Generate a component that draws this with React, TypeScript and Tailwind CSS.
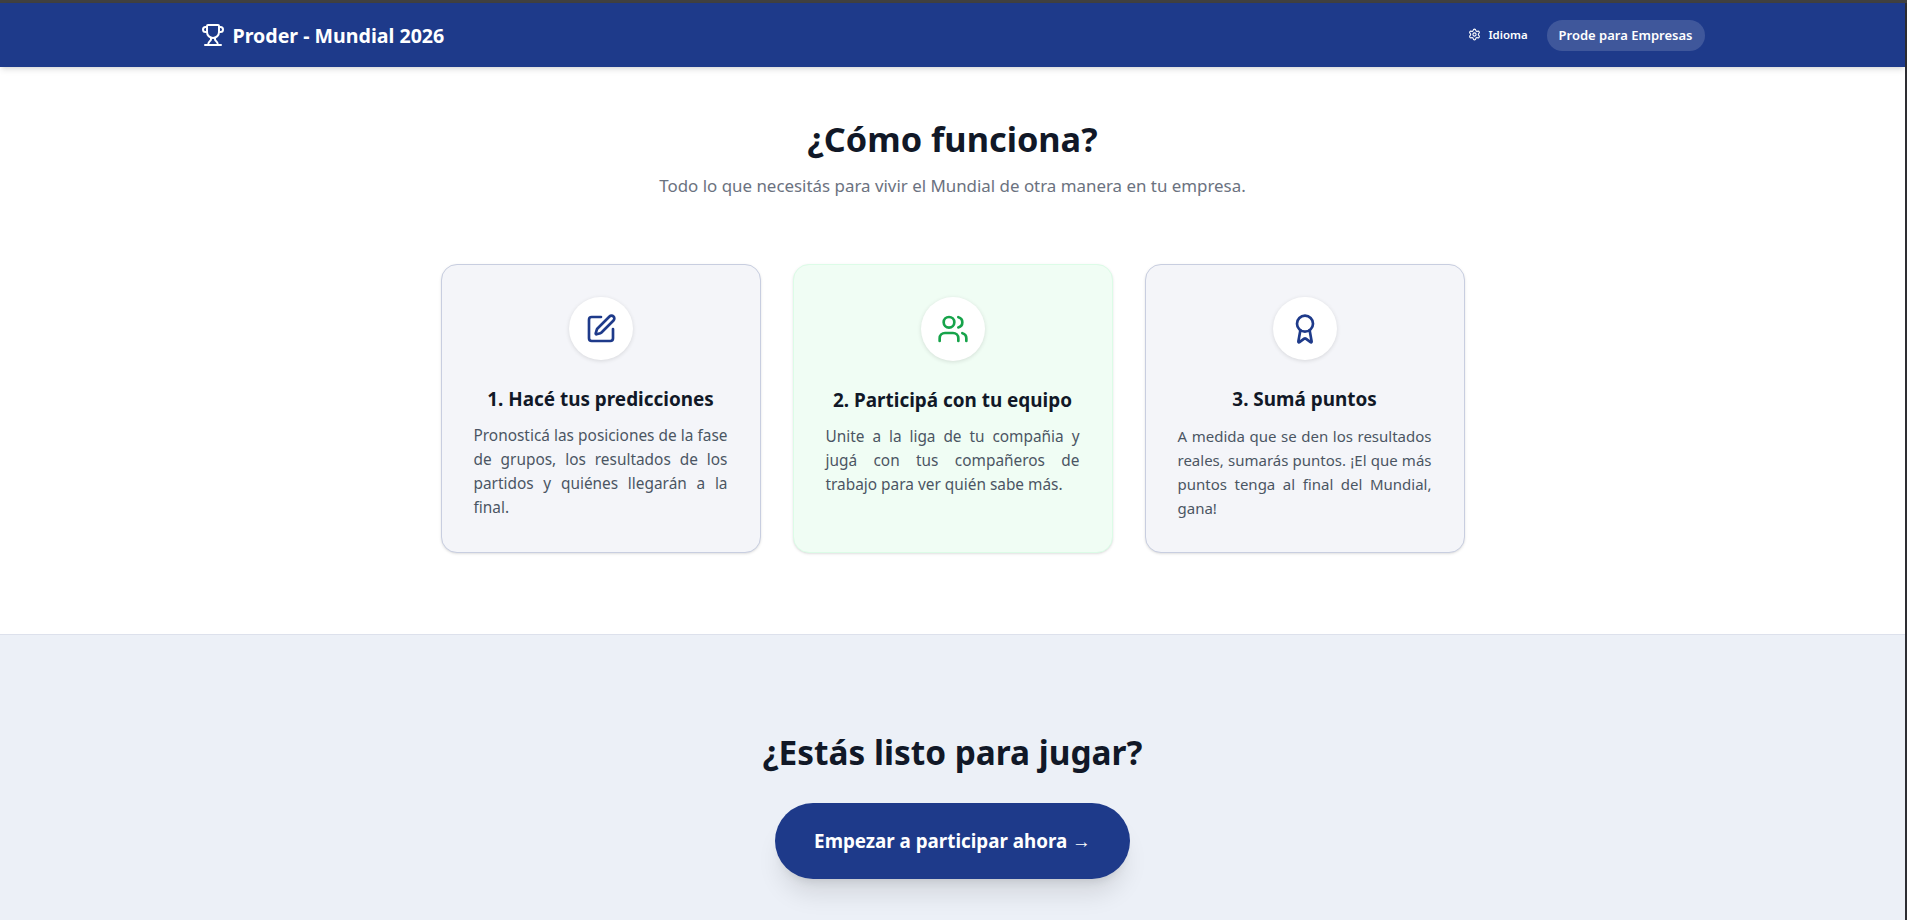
import { Trophy, Settings, SquarePen, Users, Award } from "lucide-react";

const font = "font-['Noto_Sans',sans-serif]";

const cards = [
  {
    Icon: SquarePen,
    iconClass: "text-[#1e3a8a]",
    cardClass: "bg-[#f4f5f9] border-[#c8cee0]",
    textClass: "text-[15.4px]",
    title: "1. Hacé tus predicciones",
    text: "Pronosticá las posiciones de la fase de grupos, los resultados de los partidos y quiénes llegarán a la final.",
  },
  {
    Icon: Users,
    iconClass: "text-[#16a34a]",
    cardClass: "bg-[#f0fdf4] border-[#dcfce7]",
    textClass: "text-[15.4px]",
    title: "2. Participá con tu equipo",
    text: "Unite a la liga de tu compañia y jugá con tus compañeros de trabajo para ver quién sabe más.",
  },
  {
    Icon: Award,
    iconClass: "text-[#1e3a8a]",
    cardClass: "bg-[#f4f5f9] border-[#c8cee0]",
    textClass: "text-[15px]",
    title: "3. Sumá puntos",
    text: "A medida que se den los resultados reales, sumarás puntos. ¡El que más puntos tenga al final del Mundial, gana!",
  },
];

export default function App() {
  return (
    <div className={`${font} flex h-[920px] flex-col overflow-hidden bg-white`}>
      <div className="h-[3px] shrink-0 bg-[#404040]" />
      <div className="flex min-h-0 flex-1">
        <div className="flex min-w-0 flex-1 flex-col">
          <header className="relative h-[64px] shrink-0 bg-[#1e3a8a] shadow-md">
            <div className="mx-auto flex h-full max-w-[1536px] items-center justify-between px-4">
              <div className="flex items-center gap-2 text-white">
                <Trophy className="h-6 w-6" strokeWidth={2} />
                <span className="mt-[2px] text-[19.6px] font-bold leading-7">Proder - Mundial 2026</span>
              </div>
              <div className="flex items-center gap-[19px] text-white">
                <div className="flex items-center gap-[7px]">
                  <Settings className="h-[13px] w-[13px]" />
                  <span className="text-[11.4px] font-semibold">Idioma</span>
                </div>
                <div className="rounded-full bg-white/15 px-3 py-[6px] text-[13px] font-semibold leading-[19px]">
                  Prode para Empresas
                </div>
              </div>
            </div>
          </header>
          <section className="flex h-[568px] shrink-0 flex-col items-center border-b border-[#dde1ec] pt-[52px]">
            <h1 className="text-[34.3px] font-bold leading-10 text-[#111827]">¿Cómo funciona?</h1>
            <p className="mt-[13px] text-[16.9px] leading-7 text-[#6b7280]">
              Todo lo que necesitás para vivir el Mundial de otra manera en tu empresa.
            </p>
            <div className="mt-[64px] grid w-[1024px] grid-cols-3 gap-8">
              {cards.map(({ Icon, iconClass, cardClass, textClass, title, text }) => (
                <div
                  key={title}
                  className={`flex h-[289px] flex-col items-center rounded-2xl border p-8 shadow-sm ${cardClass}`}
                >
                  <div className="flex h-16 w-16 items-center justify-center rounded-full bg-white shadow-[0_1px_4px_rgba(0,0,0,0.12)]">
                    <Icon className={`h-8 w-8 ${iconClass}`} />
                  </div>
                  <h3 className="mt-[25px] text-[18.9px] font-bold leading-7 text-[#111827]">{title}</h3>
                  <p className={`mt-[11px] w-full text-justify leading-6 text-[#4b5563] ${textClass}`}>{text}</p>
                </div>
              ))}
            </div>
          </section>
          <section className="flex flex-1 flex-col items-center bg-[#ecf0f7] pt-[97px]">
            <h2 className="text-[33.4px] font-bold leading-10 text-[#111827]">¿Estás listo para jugar?</h2>
            <div className="mt-[31px] rounded-full bg-[#1e3a8a] px-[39px] py-6 text-[18.8px] font-bold leading-7 text-white shadow-xl">
              Empezar a participar ahora →
            </div>
          </section>
        </div>
        <div className="w-[2px] shrink-0 bg-[#2e2e33]" />
      </div>
    </div>
  );
}
